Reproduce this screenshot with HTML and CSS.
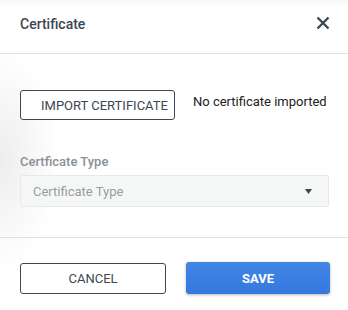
FILE: index.html
```html
<!DOCTYPE html>
<html>
<head>
<meta charset="utf-8">
<link rel="stylesheet" href="styles.css">
</head>
<body>
<div class="dialog">
  <header class="head">
    <h1 class="title">Certificate</h1>
    <button class="close" aria-label="Close">
      <svg width="14" height="14" viewBox="0 0 14 14"><path d="M1.5 1.5L12.5 12.5M12.5 1.5L1.5 12.5" stroke="#3d4752" stroke-width="2.4" stroke-linecap="butt"/></svg>
    </button>
  </header>
  <section class="body">
    <div class="import-row">
      <button class="btn-outline import">IMPORT CERTIFICATE</button>
      <span class="status">No certificate imported</span>
    </div>
    <label class="label">Certficate Type</label>
    <div class="select">
      <span class="placeholder">Certificate Type</span>
      <svg class="caret" width="7" height="5" viewBox="0 0 7 5"><path d="M0 0H7L3.5 5Z" fill="#3d4752"/></svg>
    </div>
  </section>
  <footer class="foot">
    <button class="btn-outline cancel">CANCEL</button>
    <button class="btn-primary">SAVE</button>
  </footer>
</div>
</body>
</html>
```
FILE: styles.css
```css
html, body {
  margin: 0;
  padding: 0;
}
body {
  width: 348px;
  height: 310px;
  background:
    linear-gradient(to bottom, rgba(0,0,0,0.035), rgba(0,0,0,0) 6px),
    radial-gradient(60px 110px at 0 160px, rgba(0,0,0,0.07), rgba(0,0,0,0)),
    #fff;
  font-family: Roboto, "Liberation Sans", sans-serif;
  overflow: hidden;
}
.dialog {
  display: flex;
  flex-direction: column;
}
.head {
  box-sizing: border-box;
  height: 54px;
  padding: 15px 18px 0 20px;
  display: flex;
  justify-content: space-between;
  align-items: flex-start;
  border-bottom: 1px solid #e0e0e0;
}
.title {
  margin: 0;
  font-size: 14px;
  line-height: 18px;
  font-weight: 500;
  color: #3d4752;
}
.close {
  border: 0;
  background: none;
  padding: 0;
  margin-top: 1px;
  width: 14px;
  height: 14px;
  display: block;
}
.close svg { display: block; }
.body {
  padding: 36px 19px 30px 20px;
  display: flex;
  flex-direction: column;
  border-bottom: 1px solid #e0e0e0;
}
.import-row {
  display: flex;
  align-items: flex-start;
  gap: 18px;
}
.btn-outline {
  box-sizing: border-box;
  background: #fff;
  border: 1px solid #3d4752;
  border-radius: 3px;
  font-family: Roboto, "Liberation Sans", sans-serif;
  font-size: 13px;
  color: #3d4752;
  padding: 0;
}
.import {
  width: 155px;
  height: 30px;
  text-align: left;
  padding-left: 20px;
  white-space: nowrap;
  overflow: hidden;
}
.status {
  font-size: 13px;
  line-height: 24px;
  color: #222;
}
.label {
  margin-top: 33px;
  font-size: 13px;
  font-weight: 500;
  line-height: 18px;
  color: #8b909a;
}
.select {
  margin-top: 4px;
  height: 32px;
  box-sizing: border-box;
  background: #f5f7f7;
  border: 1px solid #e8eaea;
  border-radius: 2px;
  display: flex;
  align-items: center;
  justify-content: space-between;
  padding: 0 16px 0 12px;
}
.placeholder {
  font-size: 13px;
  color: #9a9ca4;
}
.caret { display: block; margin-top: 1px; }
.foot {
  padding: 24px 18px 0 20px;
  display: flex;
  gap: 20px;
  align-items: flex-start;
}
.cancel {
  width: 146px;
  height: 31px;
  margin-top: 1px;
  text-align: center;
}
.btn-primary {
  flex: 1;
  height: 32px;
  border: 0;
  border-radius: 3px;
  background: linear-gradient(#4286e4, #3678df);
  box-shadow: 0 1px 3px rgba(0,0,0,0.3);
  color: #fff;
  font-family: Roboto, "Liberation Sans", sans-serif;
  font-size: 13px;
  font-weight: 700;
}
```
